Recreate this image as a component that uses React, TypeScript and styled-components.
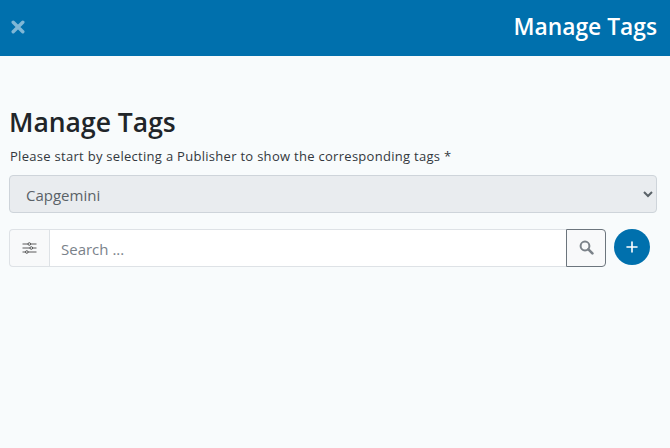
import React from "react";
import styled, { createGlobalStyle } from "styled-components";

const Global = createGlobalStyle`
  html, body { margin: 0; padding: 0; height: 100%; }
  body { background: #f8fbfc; font-family: "Open Sans", "Noto Sans", sans-serif; color: #212529; }
  * { box-sizing: border-box; }
`;

const Page = styled.div`
  width: 670px;
  height: 448px;
  display: flex;
  flex-direction: column;
  overflow: hidden;
`;

const Header = styled.header`
  height: 56px;
  flex: none;
  background: #0070ad;
  display: flex;
  align-items: center;
  justify-content: space-between;
  padding: 0 13px 2px 11px;
`;

const CloseButton = styled.button`
  border: 0;
  background: none;
  padding: 0;
  display: flex;
  color: #7fb7d6;
`;

const HeaderTitle = styled.div`
  color: #fff;
  font-size: 22.8px;
  font-weight: 600;
  line-height: 28px;
`;

const Main = styled.main`
  flex: 1;
  padding: 48px 13px 0 9px;
`;

const Title = styled.h1`
  margin: 0;
  font-size: 26.5px;
  font-weight: 560;
  line-height: 36px;
  color: #212529;
`;

const Hint = styled.p`
  margin: 7px 0 10px 1px;
  font-size: 13px;
  letter-spacing: 0.29px;
  line-height: 18px;
  color: #33383d;
`;

const PublisherSelect = styled.select`
  display: block;
  width: 648px;
  height: 38px;
  padding: 2px 12px 0;
  font: 400 15px "Open Sans", sans-serif;
  color: #5a6268;
  background: #e9ecef;
  border: 1px solid #ced4da;
  border-radius: 4px;
  outline: none;
`;

const SearchRow = styled.div`
  display: flex;
  align-items: flex-start;
  gap: 8px;
  margin-top: 16px;
`;

const SearchGroup = styled.div`
  display: flex;
  width: 597px;
  height: 38px;
`;

const FilterAddon = styled.div`
  width: 40px;
  flex: none;
  display: flex;
  align-items: center;
  justify-content: center;
  background: #f8f9fa;
  border: 1px solid #dee2e6;
  border-right: 0;
  border-radius: 4px 0 0 4px;
  color: #333;
`;

const SearchInput = styled.input`
  flex: 1;
  min-width: 0;
  height: 100%;
  padding: 2px 11px 0;
  font: 400 15px "Open Sans", sans-serif;
  color: #495057;
  background: #fff;
  border: 1px solid #dee2e6;
  border-right: 0;
  outline: none;
  &::placeholder { color: #7a828a; opacity: 1; }
`;

const SearchButton = styled.button`
  width: 40px;
  flex: none;
  display: flex;
  align-items: center;
  justify-content: center;
  padding: 0 0 2px;
  background: #f8f9fa;
  border: 1px solid #6c757d;
  border-radius: 0 4px 4px 0;
  color: #7b8289;
`;

const AddButton = styled.button`
  width: 36px;
  height: 36px;
  flex: none;
  display: flex;
  align-items: center;
  justify-content: center;
  padding: 0;
  border: 0;
  border-radius: 50%;
  background: #0070ad;
  color: #fff;
`;

export default function App() {
  return (
    <Page>
      <Global />
      <Header>
        <CloseButton aria-label="Close">
          <svg width="14" height="14" viewBox="0 0 14 14" fill="none" stroke="currentColor" strokeWidth="3.4" strokeLinecap="round">
            <path d="M2.2 2.2 11.8 11.8M11.8 2.2 2.2 11.8" />
          </svg>
        </CloseButton>
        <HeaderTitle>Manage Tags</HeaderTitle>
      </Header>
      <Main>
        <Title>Manage Tags</Title>
        <Hint>Please start by selecting a Publisher to show the corresponding tags *</Hint>
        <PublisherSelect defaultValue="Capgemini">
          <option>Capgemini</option>
        </PublisherSelect>
        <SearchRow>
          <SearchGroup>
            <FilterAddon>
              <svg width="15" height="12" viewBox="0 0 15 12" fill="none" stroke="currentColor" strokeWidth="0.8">
                <path d="M0.5 2H6M8.6 2H14.5M0.5 6H8M10.6 6H14.5M0.5 10H3.5M6 10H14.5" />
                <circle cx="7.3" cy="2" r="1.3" />
                <circle cx="9.3" cy="6" r="1.3" />
                <circle cx="4.8" cy="10" r="1.3" />
              </svg>
            </FilterAddon>
            <SearchInput placeholder="Search ..." />
            <SearchButton aria-label="Search">
              <svg width="15" height="15" viewBox="0 0 15 15" fill="none" stroke="currentColor">
                <circle cx="6" cy="6" r="4.4" strokeWidth="2" />
                <path d="M9.4 9.4 13.4 13.4" strokeWidth="2.6" strokeLinecap="round" />
              </svg>
            </SearchButton>
          </SearchGroup>
          <AddButton aria-label="Add">
            <svg width="12" height="12" viewBox="0 0 12 12" stroke="currentColor" strokeWidth="1.6" strokeLinecap="round">
              <path d="M6 1V11M1 6H11" />
            </svg>
          </AddButton>
        </SearchRow>
      </Main>
    </Page>
  );
}
